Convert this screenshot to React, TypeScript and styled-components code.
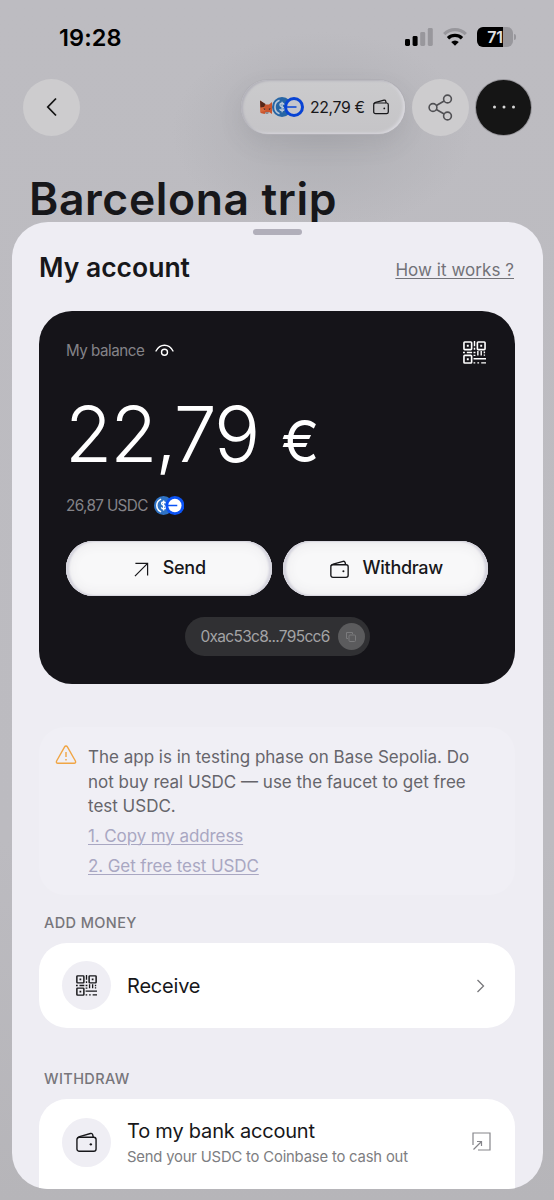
import React from "react";
import styled, { createGlobalStyle } from "styled-components";

const Global = createGlobalStyle`
  * { box-sizing: border-box; }
  body { margin: 0; font-family: Inter, "Liberation Sans", sans-serif; color: #17171a; }
  h1, h2, h3, p { margin: 0; }
  button { font: inherit; border: 0; padding: 0; color: inherit; }
  svg { display: block; flex: none; }
`;

const Screen = styled.div`
  width: 554px;
  height: 1200px;
  overflow: hidden;
  display: flex;
  flex-direction: column;
  background: radial-gradient(ellipse 150px 100px at 322px 132px, #afafb4 0%, rgba(188, 187, 192, 0) 100%), linear-gradient(#bdbcc1, #bcbbc0 70%, #b6b5b9);
`;

const StatusBar = styled.div`
  height: 74px;
  flex: none;
  padding: 0 38px 0 59px;
  display: flex;
  align-items: center;
  justify-content: space-between;
  color: #000;
`;

const Time = styled.span`
  font-size: 23.5px;
  font-weight: 600;
  letter-spacing: 0.1px;
`;

const StatusIcons = styled.div`
  display: flex;
  align-items: center;
  gap: 10px;
`;

const NavBar = styled.div`
  height: 66px;
  flex: none;
  display: flex;
  align-items: center;
  gap: 7px;
  padding: 0 23px;
`;

const RoundButton = styled.button<{ $dark?: boolean }>`
  width: ${(p) => (p.$dark ? 55 : 57)}px;
  height: ${(p) => (p.$dark ? 55 : 57)}px;
  border-radius: 50%;
  display: grid;
  place-items: center;
  background: ${(p) => (p.$dark ? "#151515" : "#cdccce")};
  box-shadow: ${(p) => (p.$dark ? "0 0 0 1px #98979c" : "none")};
`;

const BalancePill = styled.button`
  margin-left: auto;
  width: 164px;
  height: 54px;
  border-radius: 27px;
  display: flex;
  align-items: center;
  padding-left: 19px;
  background: linear-gradient(#cbcbcd, #c5c4c7);
  box-shadow: 0 0 0 1px #b0afb5, inset 2px 1px 2px #b3b2ba, inset -2px -1px 3px #dad9df, 0 10px 24px rgba(80, 80, 90, 0.12);
`;

const PillAmount = styled.span`
  font-size: 15.8px;
  letter-spacing: -0.35px;
  white-space: nowrap;
  margin: 0 8px 0 6px;
`;

const TripTitle = styled.h1`
  height: 82px;
  flex: none;
  padding: 32px 29px 0;
  font-size: 44.5px;
  line-height: 54px;
  font-weight: 600;
  letter-spacing: 0.6px;
`;

const Sheet = styled.section`
  width: 531px;
  height: 967px;
  flex: none;
  margin-left: 12px;
  border-radius: 36px;
  overflow: hidden;
  background: #eeedf3;
  display: flex;
  flex-direction: column;
  padding: 0 28px 0 27px;
`;

const Grabber = styled.div`
  width: 49px;
  height: 6px;
  border-radius: 3px;
  margin: 7px auto 0;
  background: #b1afba;
  flex: none;
`;

const SheetHeader = styled.header`
  height: 76px;
  flex: none;
  display: flex;
  align-items: center;
  justify-content: space-between;
  padding: 0 1px 12px 0;
`;

const SheetTitle = styled.h2`
  font-size: 26.5px;
  font-weight: 600;
  letter-spacing: 0;
`;

const HelpLink = styled.a`
  font-size: 17px;
  letter-spacing: 0.05px;
  color: #727278;
  text-decoration: underline;
  text-decoration-thickness: 1px;
  text-underline-offset: 2px;
  margin-top: 5px;
`;

const BalanceCard = styled.div`
  height: 373px;
  flex: none;
  background: #151419;
  border-radius: 33px;
  padding: 27px 27px 0;
  display: flex;
  flex-direction: column;
`;

const CardTop = styled.div`
  height: 29px;
  display: flex;
  justify-content: space-between;
`;

const CardLabel = styled.div`
  height: 24px;
  display: flex;
  align-items: center;
  gap: 11px;
  color: #848388;
  font-size: 15.2px;
  letter-spacing: -0.5px;
`;

const CardQr = styled.div`
  margin: 3px 2px 0 0;
  color: #fff;
`;

const Amount = styled.div`
  height: 124px;
  display: flex;
  align-items: baseline;
  margin-left: -1px;
  color: #fff;
  font-size: 77px;
  line-height: 134px;
  font-weight: 300;
  letter-spacing: -2.1px;
  white-space: nowrap;
`;

const Currency = styled.span`
  font-size: 57px;
  font-weight: 400;
  margin-left: 23px;
`;

const TokenLine = styled.div`
  height: 28px;
  display: flex;
  align-items: center;
  gap: 6px;
  color: #848388;
  font-size: 15.3px;
  letter-spacing: -0.65px;
`;

const Actions = styled.div`
  display: grid;
  grid-template-columns: 1fr 1fr;
  gap: 11px;
  margin-top: 22px;
`;

const ActionButton = styled.button`
  height: 55px;
  border-radius: 28px;
  display: flex;
  align-items: center;
  justify-content: center;
  gap: 14px;
  font-size: 18px;
  font-weight: 500;
  letter-spacing: -0.3px;
  padding: 0 0 3px 2px;
  background: #f8f8f9;
  box-shadow: inset 0 0 0 1px #d9d8e0, inset 3px 0 2px #d3d2dc, inset -3px 0 2px #d6d5df, inset 0 0 14px #e4e3e6;
  svg { margin-top: 4px; }
`;

const AddressPill = styled.div`
  align-self: center;
  width: 185px;
  height: 39px;
  border-radius: 20px;
  margin-top: 21px;
  display: flex;
  align-items: center;
  justify-content: space-between;
  padding: 0 5px 0 16px;
  background: #303033;
  color: #a3a3a5;
  font-size: 15.5px;
  letter-spacing: -0.7px;
`;

const CopyButton = styled.button`
  width: 27px;
  height: 27px;
  flex: none;
  border-radius: 50%;
  display: grid;
  place-items: center;
  background: #5b5b5d;
`;

const Notice = styled.div`
  height: 168px;
  flex: none;
  margin-top: 43px;
  border-radius: 26px;
  background: #f0eff5;
  display: flex;
  gap: 11px;
  padding: 18px 16px 0;
`;

const NoticeBody = styled.div`
  display: flex;
  flex-direction: column;
  align-items: flex-start;
  color: #66656b;
  font-size: 17px;
  line-height: 24.5px;
  letter-spacing: 0;
`;

const NoticeText = styled.p`
  white-space: nowrap;
  margin-bottom: 2px;
`;

const NoticeLink = styled.a`
  color: #a9a7c2;
  line-height: 30px;
  letter-spacing: -0.1px;
  text-decoration: underline;
  text-decoration-thickness: 1px;
  text-underline-offset: 2px;
`;

const SectionLabel = styled.h3<{ $gap: number }>`
  margin: ${(p) => p.$gap}px 0 0 5px;
  height: 30px;
  flex: none;
  font-size: 14.5px;
  line-height: 19px;
  font-weight: 500;
  letter-spacing: 0.4px;
  color: #77767b;
`;

const Row = styled.div<{ $tall?: boolean }>`
  height: ${(p) => (p.$tall ? 110 : 85)}px;
  flex: none;
  display: flex;
  align-items: ${(p) => (p.$tall ? "flex-start" : "center")};
  padding: ${(p) => (p.$tall ? "19px 24px 0 23px" : "0 30px 0 23px")};
  background: #fff;
  border-radius: ${(p) => (p.$tall ? "28px 28px 0 0" : "28px")};
`;

const RowIcon = styled.div`
  width: 49px;
  height: 49px;
  border-radius: 50%;
  background: #efeef4;
  display: grid;
  place-items: center;
  margin-right: 16px;
`;

const RowText = styled.div`
  flex: 1;
`;

const RowTitle = styled.div`
  font-size: 20px;
  line-height: 26px;
  letter-spacing: -0.2px;
`;

const RowSub = styled.div`
  font-size: 14.8px;
  line-height: 26px;
  letter-spacing: -0.17px;
  color: #7d7d81;
`;

const OpenIcon = styled.div`
  margin-top: 14px;
`;

const Signal = () => (
  <svg width="28" height="18" viewBox="0 0 28 18">
    <rect x="0" y="11" width="5" height="7" rx="1.4" />
    <rect x="7.6" y="8" width="5" height="10" rx="1.4" />
    <rect x="15.2" y="4" width="5" height="14" rx="1.4" fill="#98979c" />
    <rect x="22.8" y="0" width="5" height="18" rx="1.4" fill="#98979c" />
  </svg>
);

const Wifi = () => (
  <svg width="24" height="18" viewBox="0 0 24 18" fill="none">
    <path d="M1.2 6.1a15.4 15.4 0 0 1 21.6 0" stroke="#98979c" strokeWidth="3.2" />
    <path d="M5 10.2a10 10 0 0 1 14 0" stroke="#000" strokeWidth="3.3" />
    <path d="M8.2 14.1a5.4 5.4 0 0 1 7.6 0L12 17.8z" fill="#000" />
  </svg>
);

const BatteryWrap = styled.div`
  display: flex;
  align-items: center;
  gap: 1px;
`;

const BatteryCell = styled.div`
  width: 36px;
  height: 20px;
  border-radius: 6px;
  display: grid;
  place-items: center;
  background: linear-gradient(90deg, #000 71%, #98979c 71%);
  color: #e0e0e3;
  font-size: 16px;
  font-weight: 600;
  letter-spacing: -0.2px;
`;

const BatteryTip = styled.div`
  width: 2px;
  height: 6px;
  border-radius: 0 2px 2px 0;
  background: #98979c;
`;

const Wallet = ({ size = 18, stroke = 1.3 }: { size?: number; stroke?: number }) => (
  <svg width={size} height={size} viewBox="0 0 18 18" fill="none" stroke="currentColor" strokeWidth={stroke} strokeLinejoin="round">
    <rect x="0.8" y="4.5" width="16.4" height="12" rx="2" />
    <path d="M1 5.6C1.300 4.500 2 4.200 3 3.900L12.400 1.300c1-.3 1.600.1 1.900 1l.5 2.200" />
    <circle cx="12.7" cy="10.6" r="1" fill="currentColor" stroke="none" />
  </svg>
);

const Fox = () => (
  <svg width="12" height="15" viewBox="0 0 12 15">
    <path d="M0 .5l5.500 4h3.500L12 2v12l-3-2H7l-2.500 2L.5 13z" fill="#c8552e" />
    <path d="M0 .5l5.500 3.500-1.500 3-3.500.5z" fill="#572719" />
    <path d="M.5 8l4-1 1 4-5 1z" fill="#d9683b" />
    <path d="M3.500 8l2 1-1.300 1zM10.500 8l-2 1 1.300 1z" fill="#2c2b31" />
    <path d="M5 12h4l-1 2H6z" fill="#8b8a91" />
  </svg>
);

const Coins = ({ size, muted }: { size: number; muted?: boolean }) => (
  <svg width={size * 1.6} height={size} viewBox="0 0 32 20">
    <circle cx="10" cy="10" r="10" fill={muted ? "#2765a4" : "#2f73c5"} />
    <path d="M7.5 3.3a7.200 7.200 0 0 0 0 13.400" fill="none" stroke={muted ? "#b9c7d8" : "#fff"} strokeWidth="1.6" />
    <path d="M12.200 7.800c-.2-1-1-1.500-2.100-1.500-1.300 0-2.100.6-2.100 1.700 0 2.500 4.400 1.200 4.400 3.800 0 1.200-.9 1.800-2.300 1.800-1.300 0-2.200-.6-2.300-1.700M10.100 4.700v10.600" fill="none" stroke={muted ? "#b9c7d8" : "#fff"} strokeWidth="1.400" />
    <circle cx="22" cy="10" r="10" fill={muted ? "#0843d4" : "#0b53f5"} />
    <circle cx="22" cy="10" r="7" fill={muted ? "#c6c6cc" : "#fff"} />
    <path d="M14 10h10.500" stroke={muted ? "#0843d4" : "#0b53f5"} strokeWidth="1.500" />
  </svg>
);

const Qr = ({ size }: { size: number }) => (
  <svg width={size} height={size} viewBox="0 0 24 24" fill="none" stroke="currentColor" strokeWidth="1.7">
    <rect x="1" y="1" width="8" height="8" rx="0.8" />
    <rect x="15" y="1" width="8" height="8" rx="0.8" />
    <rect x="1" y="15" width="8" height="8" rx="0.8" />
    <path d="M4 5h2M18 5h2M4 19h2" strokeWidth="2" />
    <path d="M12 0v5.500M12 7v2M0 12h2M4 12h5.500M11 12h2M15.500 10.500v4.500M19 10.500v4.500M22.300 11v1.800M22.300 14v1.500M11 15h2M11 18.500h13M11 22.800h1.800M15 22.800h1.800M19 22.800h5" strokeWidth="1.500" />
  </svg>
);

const Eye = () => (
  <svg width="19" height="13" viewBox="0 0 19 13" fill="none" stroke="#fff" strokeWidth="1.400" strokeLinecap="round">
    <path d="M1 7C3 3.200 5.900 1.200 9.500 1.200S16 3.200 18 7" />
    <circle cx="9.500" cy="8.300" r="3" />
  </svg>
);

export default function App() {
  return (
    <Screen>
      <Global />
      <StatusBar>
        <Time>19:28</Time>
        <StatusIcons>
          <Signal />
          <Wifi />
          <BatteryWrap>
            <BatteryCell>71</BatteryCell>
            <BatteryTip />
          </BatteryWrap>
        </StatusIcons>
      </StatusBar>
      <NavBar>
        <RoundButton aria-label="Back">
          <svg width="12" height="20" viewBox="0 0 12 20" fill="none" stroke="#151515" strokeWidth="1.800">
            <path d="M10 1.500L1.800 10l8.200 8.500" />
          </svg>
        </RoundButton>
        <BalancePill>
          <Fox />
          <Coins size={20} muted />
          <PillAmount>22,79 €</PillAmount>
          <Wallet size={16} stroke={1.4} />
        </BalancePill>
        <RoundButton aria-label="Share">
          <svg width="25" height="27" viewBox="0 0 25 27" fill="none" stroke="#505054" strokeWidth="1.600">
            <circle cx="19.500" cy="5" r="3.900" />
            <circle cx="5" cy="13.500" r="3.900" />
            <circle cx="19.500" cy="22" r="3.900" />
            <path d="M8.400 11.500l7.700-4.500M8.400 15.500l7.700 4.500" />
          </svg>
        </RoundButton>
        <RoundButton $dark aria-label="More">
          <svg width="24" height="4" viewBox="0 0 24 4" fill="#d5d5d5">
            <circle cx="2.500" cy="2" r="1.500" />
            <circle cx="12" cy="2" r="1.500" />
            <circle cx="21.500" cy="2" r="1.500" />
          </svg>
        </RoundButton>
      </NavBar>
      <TripTitle>Barcelona trip</TripTitle>
      <Sheet>
        <Grabber />
        <SheetHeader>
          <SheetTitle>My account</SheetTitle>
          <HelpLink>How it works ?</HelpLink>
        </SheetHeader>
        <BalanceCard>
          <CardTop>
            <CardLabel>
              My balance
              <Eye />
            </CardLabel>
            <CardQr>
              <Qr size={23} />
            </CardQr>
          </CardTop>
          <Amount>
            22,79<Currency>€</Currency>
          </Amount>
          <TokenLine>
            26,87 USDC
            <Coins size={19} />
          </TokenLine>
          <Actions>
            <ActionButton>
              <svg width="15" height="15" viewBox="0 0 16 16" fill="none" stroke="currentColor" strokeWidth="1.300">
                <path d="M1 15L14.500 1.500M1.500 1.500h13v13" />
              </svg>
              Send
            </ActionButton>
            <ActionButton>
              <Wallet size={19} />
              Withdraw
            </ActionButton>
          </Actions>
          <AddressPill>
            0xac53c8...795cc6
            <CopyButton aria-label="Copy">
              <svg width="12" height="12" viewBox="0 0 12 12" fill="none" stroke="#7b7b7d" strokeWidth="1">
                <path d="M3 7.500H1.500v-6h6V3" />
                <rect x="4" y="4" width="6.500" height="6.500" rx="1" />
              </svg>
            </CopyButton>
          </AddressPill>
        </BalanceCard>
        <Notice>
          <svg width="22" height="20" viewBox="0 0 22 20" fill="none" stroke="#f0a544" strokeWidth="1.400" strokeLinejoin="round">
            <path d="M9.600 1.800c.6-1 2.200-1 2.800 0l8 14.200c.6 1.200 0 2.300-1.300 2.300H2.900c-1.300 0-1.900-1.100-1.300-2.300z" />
            <path d="M11 7v5M11 14v1.500" />
          </svg>
          <NoticeBody>
            <NoticeText>
              The app is in testing phase on Base Sepolia. Do
              <br />
              not buy real USDC — use the faucet to get free
              <br />
              test USDC.
            </NoticeText>
            <NoticeLink>1. Copy my address</NoticeLink>
            <NoticeLink>2. Get free test USDC</NoticeLink>
          </NoticeBody>
        </Notice>
        <SectionLabel $gap={18}>ADD MONEY</SectionLabel>
        <Row>
          <RowIcon>
            <Qr size={21} />
          </RowIcon>
          <RowText>
            <RowTitle>Receive</RowTitle>
          </RowText>
          <svg width="9" height="14" viewBox="0 0 9 14" fill="none" stroke="#77777b" strokeWidth="1.300">
            <path d="M1.500 1L7.500 7l-6 6" />
          </svg>
        </Row>
        <SectionLabel $gap={41}>WITHDRAW</SectionLabel>
        <Row $tall>
          <RowIcon>
            <Wallet size={21} stroke={1.2} />
          </RowIcon>
          <RowText>
            <RowTitle>To my bank account</RowTitle>
            <RowSub>Send your USDC to Coinbase to cash out</RowSub>
          </RowText>
          <OpenIcon>
            <svg width="19" height="19" viewBox="0 0 19 19" fill="none" stroke="#85858a" strokeWidth="1.200">
              <path d="M1 13V1h17v17H6" />
              <path d="M1.500 17.500L9.500 9.500M5 9.500h4.500V14" />
            </svg>
          </OpenIcon>
        </Row>
      </Sheet>
    </Screen>
  );
}
